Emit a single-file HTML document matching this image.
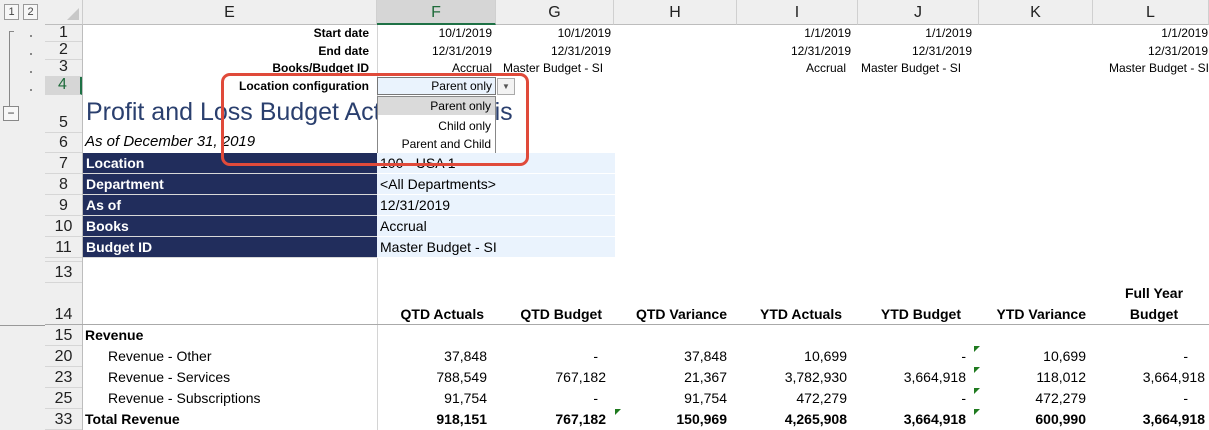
<!DOCTYPE html>
<html><head><meta charset="utf-8"><style>
*{margin:0;padding:0;box-sizing:border-box}
body{width:1209px;height:430px;overflow:hidden;background:#fff;font-family:"Liberation Sans",sans-serif;color:#000;position:relative}
.a{position:absolute;white-space:nowrap}
.r{text-align:right}
.c{text-align:center}
.rh{position:absolute;left:45px;width:37px;background:#efefef;border-bottom:1px solid #d6d6d6;font-size:16px;color:#222;text-align:center;display:flex;align-items:flex-end;justify-content:center;padding-bottom:0}
.ch{position:absolute;top:0;height:25px;background:#efefef;border-right:1px solid #d0d0d0;border-bottom:1px solid #bdbdbd;font-size:16px;color:#222;text-align:center;line-height:25px}
.b{font-weight:bold}
.nv{position:absolute;left:83px;width:294px;background:#212d5c;color:#fff;font-weight:bold;font-size:14px;padding-left:3px;line-height:20px;border-bottom:1px solid #d8d8d8}
.lb{position:absolute;left:377px;width:238px;background:#eaf3fd;font-size:14px;padding-left:3px;line-height:20px;border-bottom:1px solid #fff}
.n{position:absolute;font-size:14px;text-align:right;white-space:nowrap}
.h{position:absolute;font-size:14px;font-weight:bold;text-align:right;white-space:nowrap}
.tri{position:absolute;width:0;height:0;border-top:6px solid #1f7a1f;border-right:6px solid transparent}
</style></head><body>
<!-- gutter -->
<div class="a" style="left:0;top:0;width:45px;height:430px;background:#efefef"></div>
<div class="a c" style="left:4px;top:4px;width:15px;height:16px;border:1px solid #999;background:#f7f7f7;font-size:11px;line-height:14px;color:#444">1</div>
<div class="a c" style="left:23px;top:4px;width:15px;height:16px;border:1px solid #999;background:#f7f7f7;font-size:11px;line-height:14px;color:#444">2</div>
<div class="a" style="left:9px;top:31px;width:5px;height:89px;border-left:1px solid #888;border-top:1px solid #888"></div>
<div class="a" style="left:30px;top:35px;width:2px;height:2px;background:#888"></div>
<div class="a" style="left:30px;top:53px;width:2px;height:2px;background:#888"></div>
<div class="a" style="left:30px;top:71px;width:2px;height:2px;background:#888"></div>
<div class="a" style="left:30px;top:89px;width:2px;height:2px;background:#888"></div>
<div class="a c" style="left:3px;top:106px;width:16px;height:15px;border:1px solid #888;background:#f7f7f7;font-size:12px;line-height:12px;color:#333">−</div>
<div class="a" style="left:0;top:325px;width:45px;height:1px;background:#999"></div>
<!-- corner -->
<div class="a" style="left:45px;top:0;width:38px;height:25px;background:#efefef;border-right:1px solid #ccc;border-bottom:1px solid #bdbdbd"></div>
<div class="a" style="left:67px;top:8px;width:0;height:0;border-left:12px solid transparent;border-bottom:12px solid #c8c8c8"></div>
<!-- column headers -->
<div class="ch" style="left:83px;width:294px">E</div>
<div class="ch" style="left:377px;width:119px;background:#d6d6d6;color:#1e6b3a;border-bottom:2px solid #1e7145">F</div>
<div class="ch" style="left:496px;width:118px">G</div>
<div class="ch" style="left:614px;width:123px">H</div>
<div class="ch" style="left:737px;width:121px">I</div>
<div class="ch" style="left:858px;width:121px">J</div>
<div class="ch" style="left:979px;width:114px">K</div>
<div class="ch" style="left:1093px;width:116px">L</div>
<!-- row headers -->
<div class="rh" style="top:25px;height:17px;line-height:17px">1</div>
<div class="rh" style="top:42px;height:18px">2</div>
<div class="rh" style="top:60px;height:17px">3</div>
<div class="rh" style="top:77px;height:18px;background:#d6d6d6;color:#1e6b3a;border-right:2px solid #1e7145">4</div>
<div class="rh" style="top:95px;height:38px">5</div>
<div class="rh" style="top:133px;height:20px">6</div>
<div class="rh" style="top:153px;height:21px">7</div>
<div class="rh" style="top:174px;height:21px">8</div>
<div class="rh" style="top:195px;height:21px">9</div>
<div class="rh" style="top:216px;height:21px">10</div>
<div class="rh" style="top:237px;height:21px">11</div>
<div class="rh" style="top:258px;height:4px"></div>
<div class="rh" style="top:262px;height:21px">13</div>
<div class="rh" style="top:283px;height:42px">14</div>
<div class="rh" style="top:325px;height:21px">15</div>
<div class="rh" style="top:346px;height:21px">20</div>
<div class="rh" style="top:367px;height:21px">23</div>
<div class="rh" style="top:388px;height:21px">25</div>
<div class="rh" style="top:409px;height:21px">33</div>
<div class="a" style="left:82px;top:25px;width:1px;height:405px;background:#bdbdbd"></div>
<div class="a" style="left:377px;top:25px;width:1px;height:405px;background:#d4d4d4"></div>
<div class="a" style="left:45px;top:324px;width:1164px;height:1px;background:#aaa"></div>
<!-- rows 1-4 -->
<div class="a r b" style="left:83px;width:286px;top:26px;font-size:12px">Start date</div>
<div class="a r b" style="left:83px;width:286px;top:44px;font-size:12px">End date</div>
<div class="a r b" style="left:83px;width:286px;top:61px;font-size:12px">Books/Budget ID</div>
<div class="a r b" style="left:83px;width:286px;top:79px;font-size:12px">Location configuration</div>
<div class="n" style="left:377px;width:115px;top:26px;font-size:12px">10/1/2019</div>
<div class="n" style="left:496px;width:115px;top:26px;font-size:12px">10/1/2019</div>
<div class="n" style="left:377px;width:115px;top:44px;font-size:12px">12/31/2019</div>
<div class="n" style="left:496px;width:115px;top:44px;font-size:12px">12/31/2019</div>
<div class="n" style="left:377px;width:115px;top:61px;font-size:12px">Accrual</div>
<div class="a" style="left:503px;top:61px;font-size:12px">Master Budget - SI</div>
<div class="n" style="left:737px;width:114px;top:26px;font-size:12px">1/1/2019</div>
<div class="n" style="left:858px;width:114px;top:26px;font-size:12px">1/1/2019</div>
<div class="n" style="left:1093px;width:115px;top:26px;font-size:12px">1/1/2019</div>
<div class="n" style="left:737px;width:114px;top:44px;font-size:12px">12/31/2019</div>
<div class="n" style="left:858px;width:114px;top:44px;font-size:12px">12/31/2019</div>
<div class="n" style="left:1093px;width:115px;top:44px;font-size:12px">12/31/2019</div>
<div class="n" style="left:737px;width:109px;top:61px;font-size:12px">Accrual</div>
<div class="a" style="left:861px;top:61px;font-size:12px">Master Budget - SI</div>
<div class="n" style="left:1093px;width:116px;top:61px;font-size:12px">Master Budget - SI</div>
<!-- F4 cell -->
<div class="a" style="left:377px;top:77px;width:119px;height:18px;background:#eaf3fd;border:1px solid #777"></div>
<div class="n" style="left:377px;width:115px;top:79px;font-size:12px">Parent only</div>
<div class="a c" style="left:497px;top:78px;width:18px;height:17px;background:#f3f3f3;border:1px solid #aaa;font-size:8px;line-height:15px;color:#555">▼</div>
<!-- title -->
<div class="a" style="left:86px;top:98px;font-size:25px;color:#2a3f6e">Profit and Loss Budget Actual Analysis</div>
<div class="a" style="left:85px;top:133px;font-size:15px;font-style:italic">As of December 31, 2019</div>
<!-- dropdown list -->
<div class="a" style="left:377px;top:96px;width:119px;height:58px;background:#fff;border:1px solid #888"></div>
<div class="a" style="left:378px;top:97px;width:117px;height:18px;background:#dadada"></div>
<div class="n" style="left:377px;width:114px;top:99px;font-size:12px">Parent only</div>
<div class="n" style="left:377px;width:114px;top:119px;font-size:12px">Child only</div>
<div class="n" style="left:377px;width:114px;top:137px;font-size:12px">Parent and Child</div>
<!-- navy block -->
<div class="nv" style="top:153px;height:21px">Location</div>
<div class="nv" style="top:174px;height:21px">Department</div>
<div class="nv" style="top:195px;height:21px">As of</div>
<div class="nv" style="top:216px;height:21px">Books</div>
<div class="nv" style="top:237px;height:21px">Budget ID</div>
<div class="lb" style="top:153px;height:21px">100 - USA 1</div>
<div class="lb" style="top:174px;height:21px">&lt;All Departments&gt;</div>
<div class="lb" style="top:195px;height:21px">12/31/2019</div>
<div class="lb" style="top:216px;height:21px">Accrual</div>
<div class="lb" style="top:237px;height:21px">Master Budget - SI</div>
<!-- red box -->
<div class="a" style="left:221px;top:73px;width:308px;height:93px;border:3px solid #e04a3a;border-radius:9px"></div>
<!-- headers row 14 -->
<div class="h" style="left:377px;width:107px;top:306px">QTD Actuals</div>
<div class="h" style="left:496px;width:106px;top:306px">QTD Budget</div>
<div class="h" style="left:614px;width:113px;top:306px">QTD Variance</div>
<div class="h" style="left:737px;width:105px;top:306px">YTD Actuals</div>
<div class="h" style="left:858px;width:103px;top:306px">YTD Budget</div>
<div class="h" style="left:979px;width:107px;top:306px">YTD Variance</div>
<div class="h c" style="left:1110px;width:88px;top:285px;text-align:center">Full Year</div>
<div class="h c" style="left:1110px;width:88px;top:306px;text-align:center">Budget</div>
<!-- data -->
<div class="a b" style="left:85px;top:327px;font-size:14px">Revenue</div>
<div class="a" style="left:108px;top:348px;font-size:14px">Revenue - Other</div>
<div class="a" style="left:108px;top:369px;font-size:14px">Revenue - Services</div>
<div class="a" style="left:108px;top:390px;font-size:14px">Revenue - Subscriptions</div>
<div class="a b" style="left:85px;top:411px;font-size:14px">Total Revenue</div>

<div class="n" style="left:377px;width:110px;top:348px">37,848</div>
<div class="n" style="left:496px;width:102px;top:348px">-</div>
<div class="n" style="left:614px;width:113px;top:348px">37,848</div>
<div class="n" style="left:737px;width:110px;top:348px">10,699</div>
<div class="n" style="left:858px;width:108px;top:348px">-</div>
<div class="n" style="left:979px;width:107px;top:348px">10,699</div>
<div class="n" style="left:1093px;width:95px;top:348px">-</div>

<div class="n" style="left:377px;width:110px;top:369px">788,549</div>
<div class="n" style="left:496px;width:110px;top:369px">767,182</div>
<div class="n" style="left:614px;width:113px;top:369px">21,367</div>
<div class="n" style="left:737px;width:110px;top:369px">3,782,930</div>
<div class="n" style="left:858px;width:108px;top:369px">3,664,918</div>
<div class="n" style="left:979px;width:107px;top:369px">118,012</div>
<div class="n" style="left:1093px;width:112px;top:369px">3,664,918</div>

<div class="n" style="left:377px;width:110px;top:390px">91,754</div>
<div class="n" style="left:496px;width:102px;top:390px">-</div>
<div class="n" style="left:614px;width:113px;top:390px">91,754</div>
<div class="n" style="left:737px;width:110px;top:390px">472,279</div>
<div class="n" style="left:858px;width:108px;top:390px">-</div>
<div class="n" style="left:979px;width:107px;top:390px">472,279</div>
<div class="n" style="left:1093px;width:95px;top:390px">-</div>

<div class="n b" style="left:377px;width:110px;top:411px">918,151</div>
<div class="n b" style="left:496px;width:110px;top:411px">767,182</div>
<div class="n b" style="left:614px;width:113px;top:411px">150,969</div>
<div class="n b" style="left:737px;width:110px;top:411px">4,265,908</div>
<div class="n b" style="left:858px;width:108px;top:411px">3,664,918</div>
<div class="n b" style="left:979px;width:107px;top:411px">600,990</div>
<div class="n b" style="left:1093px;width:112px;top:411px">3,664,918</div>
<!-- green triangles -->
<div class="tri" style="left:615px;top:409px"></div>
<div class="tri" style="left:974px;top:346px"></div>
<div class="tri" style="left:974px;top:367px"></div>
<div class="tri" style="left:974px;top:388px"></div>
<div class="tri" style="left:974px;top:409px"></div>
</body></html>
